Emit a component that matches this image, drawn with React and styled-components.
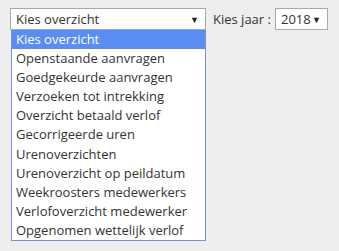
import styled, { createGlobalStyle } from 'styled-components'

const GlobalStyle = createGlobalStyle`
  html, body, #root {
    margin: 0;
    height: 100%;
    background: #eeeeee;
  }
  body {
    font-family: "Open Sans", "Liberation Sans", sans-serif;
    color: #333;
  }
`;

const Page = styled.div`
  padding: 8px 10px;
  height: 100%;
  box-sizing: border-box;
  display: flex;
  align-items: flex-start;
  gap: 7px;
`;
const SelectWrap = styled.div`
  position: relative;
`;
const Select = styled.div`
  box-sizing: border-box;
  width: ${p => p.$width}px;
  height: 22px;
  background: #fff;
  border: 1px solid #a9a9a9;
  display: flex;
  align-items: center;
  justify-content: space-between;
  padding: 0 6px 0 5px;
  font-size: 13px;
  color: #333;
  white-space: nowrap;
`;
const Arrow = styled.span`
  font-size: 9px;
  color: #222;
`;
const List = styled.ul`
  position: absolute;
  top: 22px;
  left: 1px;
  width: 195px;
  box-sizing: border-box;
  margin: 0;
  padding: 0;
  list-style: none;
  background: #fff;
  border: 1px solid #7d8fd6;
  border-top: none;
  z-index: 2;
`;
const Item = styled.li`
  height: 19.1px;
  line-height: 19px;
  padding-left: 4px;
  font-size: 13px;
  white-space: nowrap;
  color: ${p => (p.$active ? '#fff' : '#333')};
  background: ${p => (p.$active ? '#5a8df2' : 'transparent')};
`;
const Label = styled.span`
  font-size: 13px;
  line-height: 22px;
  color: #333;
  white-space: nowrap;
`;
const YearRow = styled.div`
  display: flex;
  align-items: center;
  gap: 4px;
`;

const items = [
  'Kies overzicht',
  'Openstaande aanvragen',
  'Goedgekeurde aanvragen',
  'Verzoeken tot intrekking',
  'Overzicht betaald verlof',
  'Gecorrigeerde uren',
  'Urenoverzichten',
  'Urenoverzicht op peildatum',
  'Weekroosters medewerkers',
  'Verlofoverzicht medewerker',
  'Opgenomen wettelijk verlof',
];

export default function App() {
  return (
    <>
      <GlobalStyle />
      <Page>
        <SelectWrap>
          <Select $width={196}>
            <span>Kies overzicht</span>
            <Arrow>▼</Arrow>
          </Select>
          <List>
            {items.map((it, i) => (
              <Item key={it} $active={i === 0}>{it}</Item>
            ))}
          </List>
        </SelectWrap>
        <YearRow>
          <Label>Kies jaar :</Label>
          <Select $width={53}>
            <span>2018</span>
            <Arrow>▼</Arrow>
          </Select>
        </YearRow>
      </Page>
    </>
  )
}
